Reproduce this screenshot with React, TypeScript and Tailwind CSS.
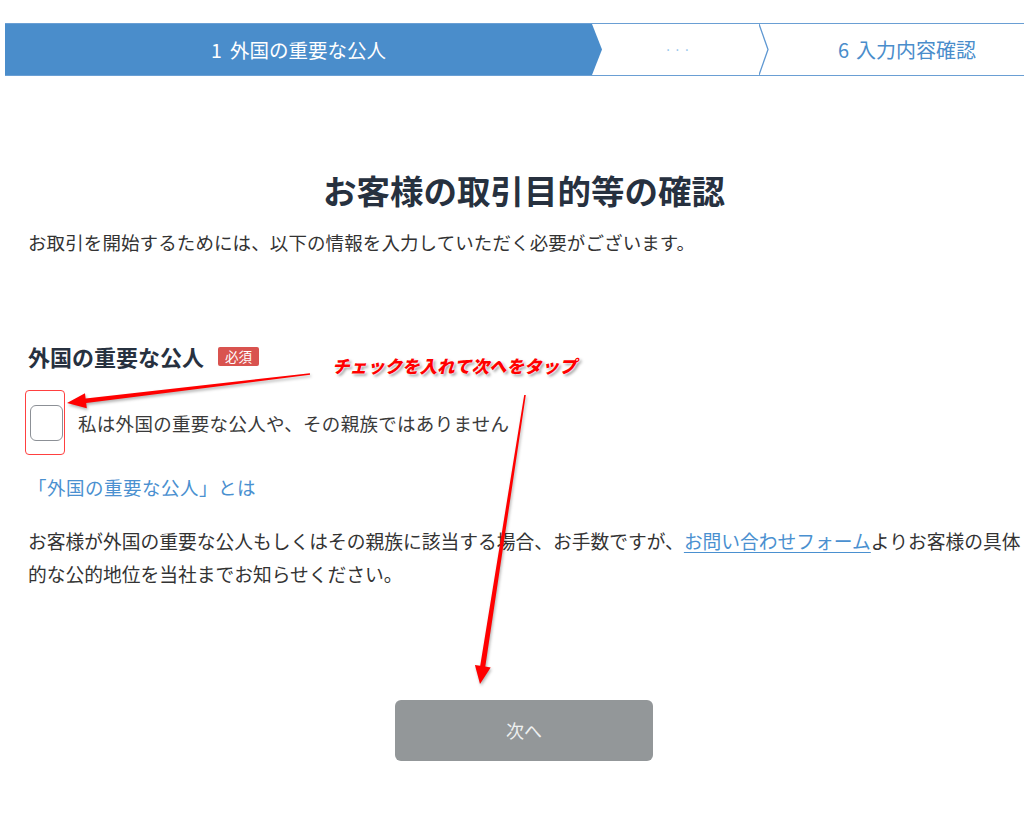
import React from 'react';

const FONT = '"Noto Sans CJK JP", "Noto Sans", sans-serif';

// tapered arrow: thin tail, wider neck, triangular head
function arrowPoints(x0: number, y0: number, x1: number, y1: number, head = 18, headW = 8, tail = 0.8, neck = 2.6) {
  const dx = x1 - x0;
  const dy = y1 - y0;
  const len = Math.hypot(dx, dy);
  const ux = dx / len;
  const uy = dy / len;
  const px = -uy;
  const py = ux;
  const bx = x1 - ux * head;
  const by = y1 - uy * head;
  const pts = [
    [x0 + px * tail, y0 + py * tail],
    [bx + px * neck, by + py * neck],
    [bx + px * headW, by + py * headW],
    [x1, y1],
    [bx - px * headW, by - py * headW],
    [bx - px * neck, by - py * neck],
    [x0 - px * tail, y0 - py * tail],
  ];
  return pts.map((p) => `${p[0].toFixed(1)},${p[1].toFixed(1)}`).join(' ');
}

function Stepper() {
  return (
    <div className="pl-[5px] pt-[23px]">
      <div className="flex h-[53px] border-y border-[#6a9fd4]">
        <div className="relative flex w-[587px] items-center justify-center bg-[#4a8dcb] text-[19.5px] text-white">
          <span>1</span>
          <span className="ml-[8px]">外国の重要な公人</span>
          <svg className="absolute left-full top-0 h-full w-[10px]" viewBox="0 0 10 51" preserveAspectRatio="none">
            <polygon points="0,0 10,25.5 0,51" fill="#4a8dcb" />
          </svg>
        </div>
        <div className="relative flex w-[167px] items-center justify-center text-[13px] tracking-[2px] text-[#8cc0ea]">
          <span className="pl-[6px]">···</span>
          <svg className="absolute left-full top-0 h-full w-[10px]" viewBox="0 0 10 51" preserveAspectRatio="none">
            <polyline points="0,0 9,25.5 0,51" fill="none" stroke="#5f98d2" strokeWidth="1.3" />
          </svg>
        </div>
        <div className="flex flex-1 items-center pl-[79px] text-[20px] text-[#4a8dcb]">
          <span>6</span>
          <span className="ml-[7px]">入力内容確認</span>
        </div>
      </div>
    </div>
  );
}

export default function App() {
  return (
    <div className="relative min-h-[825px] w-full bg-white" style={{ fontFamily: FONT }}>
      <Stepper />

      <div className="pl-[28px] pr-[4px] text-[18.5px] text-[#333]">
        <h1 className="mt-[94px] text-center text-[33.5px] font-bold leading-[40px] text-[#27313f]">
          お客様の取引目的等の確認
        </h1>
        <p className="mt-[16px] leading-[33px] tracking-[0.1px]">
          お取引を開始するためには、以下の情報を入力していただく必要がございます。
        </p>

        <div className="mt-[82px] flex h-[30px] items-center">
          <span className="text-[22px] font-bold leading-[30px] text-[#27313f]">外国の重要な公人</span>
          <span className="ml-[14px] flex h-[19px] w-[41px] items-center justify-center rounded-[2px] bg-[#d9534f] text-[13.5px] text-white">
            必須
          </span>
        </div>

        <label className="mt-[34px] flex h-[36px] items-center">
          <span className="ml-[2px] h-[36px] w-[33px] rounded-[6px] border-[1.5px] border-[#8c9096] bg-white" />
          <span className="ml-[15px] leading-[33px] tracking-[0.3px] text-[#3a3a3a]">
            私は外国の重要な公人や、その親族ではありません
          </span>
        </label>

        <p className="mt-[30px] leading-[33px] tracking-[0.5px] text-[#4a90d0]">「外国の重要な公人」とは</p>

        <p className="mr-[-4px] mt-[20px] text-[18.75px] leading-[33px]">
          お客様が外国の重要な公人もしくはその親族に該当する場合、お手数ですが、
          <span className="text-[#4a90d0] underline underline-offset-[3px]">お問い合わせフォーム</span>
          よりお客様の具体的な公的地位を当社までお知らせください。
        </p>

        <div className="mt-[110px] flex justify-center">
          <button className="flex h-[61px] w-[258px] items-center justify-center rounded-[6px] bg-[#939799] text-[18px] text-[#eef0f0]">
            次へ
          </button>
        </div>
      </div>

      {/* annotations */}
      <div className="pointer-events-none absolute left-[25px] top-[390px] h-[65px] w-[40px] rounded-[4px] border-[1.5px] border-[#ff4040]" />
      <div
        className="pointer-events-none absolute left-[332px] top-[354px] text-[17.5px] font-black italic leading-[24px] text-[#ff0000]"
        style={{ textShadow: '0 0 2px #fff, 0 0 2px #fff, 2px 2px 3px rgba(0,0,0,0.4)' }}
      >
        チェックを入れて次へをタップ
      </div>
      <svg className="pointer-events-none absolute left-0 top-0" width="1024" height="825">
        <g fill="#ff0000" style={{ filter: 'drop-shadow(1px 2px 1.5px rgba(0,0,0,0.3))' }}>
          <polygon points={arrowPoints(310, 374, 67, 403, 19, 7.5, 0.8, 2.4)} />
          <polygon points={arrowPoints(525, 395, 480, 684, 18, 8, 0.8, 2.6)} />
        </g>
      </svg>
    </div>
  );
}
